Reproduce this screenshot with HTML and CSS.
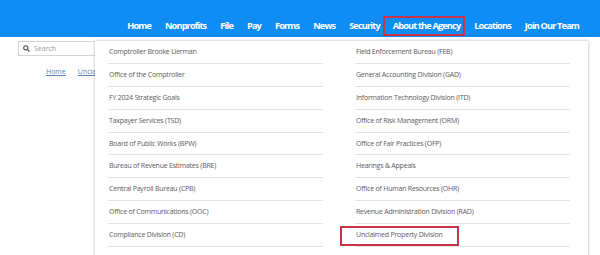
FILE: index.html
```html
<!DOCTYPE html>
<html lang="en">
<head>
    <meta charset="UTF-8">
    <meta name="viewport" content="width=device-width, initial-scale=1.0">
    <title>About the Agency</title>
    <link rel="stylesheet" href="styles.css">
</head>
<body>
    <header class="topbar">
        <nav class="main-nav">
            <a href="#">Home</a>
            <a href="#">Nonprofits</a>
            <a href="#">File</a>
            <a href="#">Pay</a>
            <a href="#">Forms</a>
            <a href="#">News</a>
            <a href="#">Security</a>
            <a href="#" class="active">About the Agency</a>
            <a href="#">Locations</a>
            <a href="#">Join Our Team</a>
        </nav>
    </header>

    <div class="page">
        <div class="search-box">
            <svg width="7" height="7" viewBox="0 0 10 10">
                <circle cx="4" cy="4" r="3" fill="none" stroke="#555" stroke-width="1.6"/>
                <line x1="6.2" y1="6.2" x2="9.2" y2="9.2" stroke="#555" stroke-width="1.8"/>
            </svg>
            <span>Search</span>
        </div>
        <div class="breadcrumb">
            <a href="#">Home</a>
            <a href="#">Unclaimed Property</a>
        </div>

        <!-- dropdown for About the Agency -->
        <div class="mega-menu">
            <ul class="menu-col">
                <li>Comptroller Brooke Lierman</li>
                <li>Office of the Comptroller</li>
                <li>FY 2024 Strategic Goals</li>
                <li>Taxpayer Services (TSD)</li>
                <li>Board of Public Works (BPW)</li>
                <li>Bureau of Revenue Estimates (BRE)</li>
                <li>Central Payroll Bureau (CPB)</li>
                <li>Office of Communications (OOC)</li>
                <li>Compliance Division (CD)</li>
            </ul>
            <ul class="menu-col">
                <li>Field Enforcement Bureau (FEB)</li>
                <li>General Accounting Division (GAD)</li>
                <li>Information Technology Division (ITD)</li>
                <li>Office of Risk Management (ORM)</li>
                <li>Office of Fair Practices (OFP)</li>
                <li>Hearings &amp; Appeals</li>
                <li>Office of Human Resources (OHR)</li>
                <li>Revenue Administration Division (RAD)</li>
                <li class="marked">Unclaimed Property Division</li>
            </ul>
        </div>
    </div>
</body>
</html>
```

FILE: styles.css
```css
body {
    margin: 0;
    font-family: "Open Sans", "Liberation Sans", sans-serif;
    background: #fff;
    height: 255px;
    overflow: hidden;
}
.topbar {
    background-color: #108cf5;
    height: 37px;
    display: flex;
    justify-content: flex-end;
    align-items: flex-end;
    padding-right: 14px;
}
.main-nav {
    display: flex;
    align-items: center;
    height: 22px;
}
.main-nav a {
    color: #fff;
    text-decoration: none;
    font-weight: 700;
    font-size: 9.2px;
    letter-spacing: -0.85px;
    padding: 0 7px;
    line-height: 16px;
}
.main-nav a.active {
    border: 2px solid #c8324a;
    padding: 0 3px 0 8px;
    margin: 0 2px 0 -4px;
}
.page {
    position: relative;
    height: 218px;
}
.search-box {
    margin: 4px 0 0 18px;
    width: 90px;
    height: 13px;
    border: 1px solid #d4d4d4;
    display: flex;
    align-items: center;
    gap: 4px;
    padding-left: 4px;
    font-size: 7px;
    color: #999;
}
.breadcrumb {
    margin: 11px 0 0 46px;
    width: 49px;
    overflow: hidden;
    white-space: nowrap;
    display: flex;
    gap: 12px;
    font-size: 7px;
}
.breadcrumb a {
    color: #5a88b4;
}
.mega-menu {
    position: absolute;
    left: 95px;
    top: 0;
    bottom: 0;
    width: 493px;
    background: #fff;
    box-shadow: 0 0 3px rgba(0, 0, 0, 0.3);
    display: grid;
    grid-template-columns: 215px 215px;
    column-gap: 32px;
    padding: 0 18px 0 13px;
    box-sizing: border-box;
}
.menu-col {
    list-style: none;
    margin: 0;
    padding: 0;
}
.menu-col li {
    height: 21.9px;
    line-height: 21.9px;
    border-bottom: 1px solid #e3e3e3;
    font-size: 7px;
    letter-spacing: -0.22px;
    color: #5c5c5c;
    padding-left: 1px;
    position: relative;
}
.menu-col li.marked::after {
    content: "";
    position: absolute;
    left: -15px;
    top: 2px;
    width: 115px;
    height: 16px;
    border: 2px solid #c8324a;
}
```
